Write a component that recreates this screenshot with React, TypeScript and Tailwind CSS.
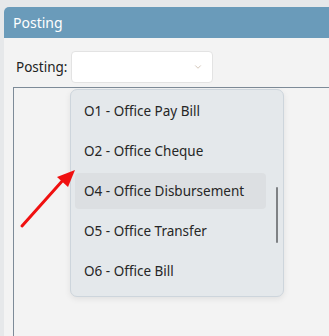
import { ChevronDown } from 'lucide-react';

const options = [
    { code: 'O1', name: 'Office Pay Bill' },
    { code: 'O2', name: 'Office Cheque' },
    { code: 'O4', name: 'Office Disbursement', active: true },
    { code: 'O5', name: 'Office Transfer' },
    { code: 'O6', name: 'Office Bill' },
];

export default function App() {
    return (
        <div
            className="relative h-[336px] w-[329px] overflow-hidden bg-[#e6e8ea] pl-[4px] pt-[7px]"
            style={{ fontFamily: '"Noto Sans", "Open Sans", sans-serif' }}
        >
            {/* Panel */}
            <div className="flex h-full flex-col rounded-tl-[5px] bg-[#f3f3f3]">
                <div className="flex h-[31px] items-center rounded-tl-[5px] bg-[#6a9bba] pl-[9px] text-[14px] text-white">
                    Posting
                </div>

                <div className="flex items-center pl-[12px] pt-[13px]">
                    <span className="w-[55px] text-[13.5px] text-[#222]">Posting:</span>
                    <div className="flex h-[32px] w-[142px] items-center justify-end rounded-[4px] border border-[#e3e3e3] bg-white pr-[9px]">
                        <ChevronDown className="size-[10px] text-[#b9a48e]" strokeWidth={1.5} />
                    </div>
                </div>

                <div className="ml-[9px] mt-[4px] flex-1 border-l border-t border-[#7d8b98]" />
            </div>

            {/* Dropdown list */}
            <div className="absolute left-[70px] top-[89px] h-[208px] w-[214px] rounded-[7px] border border-[#cdd5dc] bg-[#e4e8eb] shadow-[0_2px_6px_rgba(0,0,0,0.08)]">
                <div className="flex flex-col gap-[4px] pl-[4px] pr-[17px] pt-[3px]">
                    {options.map((o) => (
                        <div
                            key={o.code}
                            className={`flex h-[36px] items-center rounded-[4px] pl-[9px] text-[13.5px] text-[#262626] ${o.active ? 'bg-[#dcdfe2]' : ''}`}
                        >
                            {o.code} - {o.name}
                        </div>
                    ))}
                </div>
                {/* Scrollbar */}
                <div className="absolute left-[205px] top-[97px] h-[56px] w-[2px] rounded-full bg-[#7e8184]" />
            </div>

            {/* Red arrow */}
            <svg className="absolute left-0 top-0" width="329" height="336" viewBox="0 0 329 336">
                <line x1="22" y1="226" x2="64" y2="179" stroke="#f01010" strokeWidth="3" strokeLinecap="round" />
                <polygon points="75,170 57,177 68,187" fill="#f01010" />
            </svg>
        </div>
    );
}
